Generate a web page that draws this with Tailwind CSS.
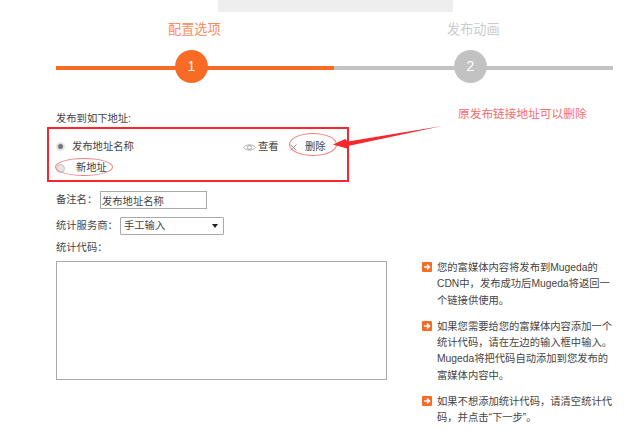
<!DOCTYPE html>
<html lang="zh">
<head>
  <meta charset="UTF-8">
  <title>发布动画</title>
  <script src="https://cdn.jsdelivr.net/npm/@tailwindcss/browser@4"></script>
</head>
<body class="bg-white">
  <div class="relative w-[640px] h-[435px] overflow-hidden bg-white text-[#444] text-[10.3px] font-['Liberation_Sans','Noto_Sans_CJK_TC',sans-serif]">
    <!-- top bar -->
    <div class="ml-[218px] w-[235px] h-[12px] bg-[#eeeeee]"></div>

    <!-- steps -->
    <div class="relative ml-[56px] w-[557px] h-[71px] mt-[9px]">
      <div class="absolute left-0 top-[45px] w-[278px] h-[4px] bg-[#f96a24]"></div>
      <div class="absolute left-[278px] top-[45px] w-[279px] h-[4px] bg-[#c2c2c2]"></div>
      <div class="absolute left-[112px] top-0 text-[13.2px] leading-[18px] text-[#fb8a60]">配置选项</div>
      <div class="absolute left-[391px] top-0 text-[13.2px] leading-[18px] text-[#cccccc]">发布动画</div>
      <div class="absolute left-[119px] top-[29px] w-[33px] h-[33px] rounded-full bg-[#f96a24] text-white text-[14px] flex items-center justify-center">1</div>
      <div class="absolute left-[398px] top-[29px] w-[33px] h-[33px] rounded-full bg-[#c2c2c2] text-white text-[14px] flex items-center justify-center">2</div>
    </div>

    <!-- form -->
    <div class="ml-[56px] mt-[19px] leading-[16px]">发布到如下地址:</div>
    <div class="ml-[56px] mt-[12px] w-[280px] flex items-center h-[16px]">
      <span class="w-[9px] h-[9px] rounded-full border-2 border-[#e4e4e4] bg-[#777] -mt-[2px] mr-[7px]"></span>
      <span class="w-[171px]">发布地址名称</span>
      <svg class="w-[13px] h-[9px] mr-[2px]" viewBox="0 0 13 9" fill="none" stroke="#999" stroke-width="0.8"><path d="M0.5 4.5C3 1 10 1 12.5 4.5C10 8 3 8 0.5 4.5Z"/><circle cx="6.5" cy="4.5" r="2"/></svg>
      <span class="w-[32px]">查看</span>
      <svg class="w-[7px] h-[7px] mr-[8px]" viewBox="0 0 7 7" fill="none" stroke="#777" stroke-width="0.8"><path d="M0.5 0.5L6.5 6.5M6.5 0.5L0.5 6.5"/></svg>
      <span>删除</span>
    </div>
    <div class="ml-[56px] mt-[5px] flex items-center h-[16px]">
      <span class="w-[9px] h-[9px] rounded-full border border-[#c4c4c4] bg-[#e6e6e6] mr-[11px]"></span>
      <span>新地址</span>
    </div>

    <div class="ml-[56px] mt-[15px] flex items-center h-[18px]">
      <span class="w-[44px]">备注名：</span>
      <input class="w-[107px] h-[18px] border border-[#aaa] px-[1px] text-[10.3px] text-[#444]" value="发布地址名称">
    </div>
    <div class="ml-[56px] mt-[8px] flex items-center h-[18px]">
      <span class="w-[64px]">统计服务商：</span>
      <div class="w-[104px] h-[18px] border border-[#aaa] rounded-[1px] pl-[3px] pr-[5px] flex items-center justify-between">
        <span>手工输入</span>
        <span class="w-0 h-0 border-x-[3px] border-x-transparent border-t-[4px] border-t-[#222]"></span>
      </div>
    </div>
    <div class="ml-[56px] mt-[5px] leading-[16px]">统计代码：</div>

    <div class="ml-[56px] mt-[5px] flex items-start">
      <div class="w-[331px] h-[119px] border border-[#aaa]"></div>
      <div class="ml-[35px] w-[200px] leading-[16.3px] flex flex-col gap-[10px] -mt-[1px]">
        <div class="flex gap-[5px]">
          <span class="w-[10px] h-[10px] mt-[2px] shrink-0 rounded-[1px] bg-[#f96a24] flex items-center justify-center">
            <svg class="w-[8px] h-[8px]" viewBox="0 0 8 8" fill="none" stroke="#fff" stroke-width="1.5"><path d="M1 4H6M4 1.5L6.5 4L4 6.5"/></svg>
          </span>
          <p>您的富媒体内容将发布到Mugeda的<br>CDN中，发布成功后Mugeda将返回一<br>个链接供使用。</p>
        </div>
        <div class="flex gap-[5px]">
          <span class="w-[10px] h-[10px] mt-[2px] shrink-0 rounded-[1px] bg-[#f96a24] flex items-center justify-center">
            <svg class="w-[8px] h-[8px]" viewBox="0 0 8 8" fill="none" stroke="#fff" stroke-width="1.5"><path d="M1 4H6M4 1.5L6.5 4L4 6.5"/></svg>
          </span>
          <p>如果您需要给您的富媒体内容添加一个<br>统计代码，请在左边的输入框中输入。<br>Mugeda将把代码自动添加到您发布的<br>富媒体内容中。</p>
        </div>
        <div class="flex gap-[5px]">
          <span class="w-[10px] h-[10px] mt-[2px] shrink-0 rounded-[1px] bg-[#f96a24] flex items-center justify-center">
            <svg class="w-[8px] h-[8px]" viewBox="0 0 8 8" fill="none" stroke="#fff" stroke-width="1.5"><path d="M1 4H6M4 1.5L6.5 4L4 6.5"/></svg>
          </span>
          <p>如果不想添加统计代码，请清空统计代<br>码，并点击“下一步”。</p>
        </div>
      </div>
    </div>

    <!-- annotations on top of the screenshot -->
    <div class="absolute left-[47px] top-[127px] w-[302px] h-[55px] border-2 border-[#f8262e]"></div>
    <div class="absolute left-[289px] top-[133px] w-[48px] h-[23px] rounded-[50%] border border-[#f08080]"></div>
    <div class="absolute left-[55px] top-[158px] w-[58px] h-[18px] rounded-[50%] border border-[#f08080]"></div>
    <svg class="absolute left-[325px] top-[120px]" width="125" height="40" viewBox="0 0 125 40"><path d="M117 6L23 21.5L20 19L8 24.5L22 28.5L23 26Z" fill="#f8262e"/></svg>
    <div class="absolute left-[458px] top-[106px] text-[11.7px] leading-[16px] text-[#f76b6b] whitespace-nowrap">原发布链接地址可以删除</div>
  </div>
</body>
</html>
